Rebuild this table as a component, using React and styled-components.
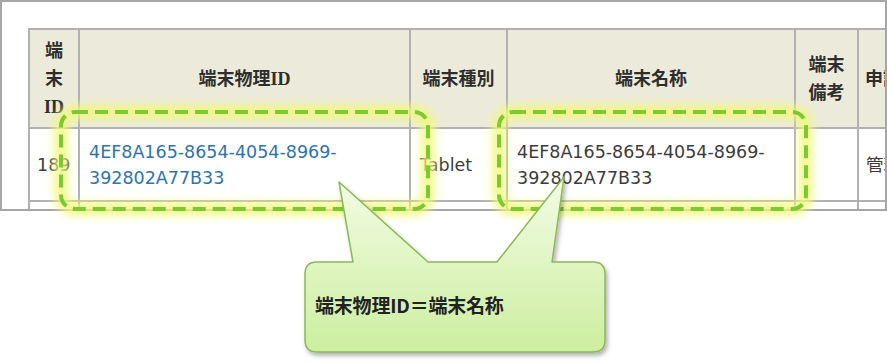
import React from 'react';
import styled, { createGlobalStyle } from 'styled-components';

const GlobalStyle = createGlobalStyle`
  html, body {
    margin: 0;
    padding: 0;
    background: #ffffff;
  }
`;

const columns = [50, 331, 97, 288, 63, 120];

const Stage = styled.div`
  position: relative;
  width: 887px;
  height: 363px;
  overflow: hidden;
  background: #ffffff;
`;

const Frame = styled.div`
  box-sizing: border-box;
  width: 887px;
  height: 211px;
  border: 2px solid #a6a6a6;
  padding: 26px 0 0 26px;
  overflow: hidden;
  background: #ffffff;
`;

const Table = styled.table`
  border-collapse: collapse;
  table-layout: fixed;
  width: ${columns.reduce((a, b) => a + b, 0)}px;
`;

const HeadCell = styled.th`
  height: 97px;
  padding: 0 6px;
  background: #ecebdb;
  border: 2px solid #b1b1b1;
  color: #2e2e2e;
  font-family: "Liberation Serif", "Noto Sans CJK JP", serif;
  font-size: 18px;
  font-weight: bold;
  line-height: 28px;
  text-align: ${(p) => (p.$left ? 'left' : 'center')};
  vertical-align: middle;
  white-space: nowrap;
`;

const Cell = styled.td`
  height: ${(p) => p.$h || 71}px;
  padding: 0 9px 0 ${(p) => p.$pl ?? 9}px;
  border: 2px solid #b1b1b1;
  color: #3c3c3c;
  font-family: "DejaVu Sans", "Noto Sans CJK JP", sans-serif;
  font-size: 17.5px;
  line-height: 26px;
  text-align: left;
  vertical-align: middle;
  overflow: hidden;
`;

const Link = styled.span`
  color: #2f73ac;
`;

const Overlay = styled.svg`
  position: absolute;
  left: 0;
  top: 0;
  width: 887px;
  height: 363px;
  pointer-events: none;
`;

const CalloutText = styled.div`
  position: absolute;
  left: 305px;
  top: 262px;
  width: 300px;
  height: 90px;
  box-sizing: border-box;
  padding: 0 0 6px 10px;
  display: flex;
  align-items: center;
  color: #222222;
  font-family: "Noto Sans CJK JP", sans-serif;
  font-size: 19px;
  font-weight: bold;
  letter-spacing: -0.2px;
`;

const marks = [
  { x: 61, y: 112, w: 367, h: 97 },
  { x: 499, y: 112, w: 307, h: 97 },
];

const calloutPath =
  'M 317 262 L 353 262 L 339 182 L 428 262 L 497 262 L 564 177 L 552 262 L 593 262 ' +
  'Q 605 262 605 274 L 605 340 Q 605 352 593 352 L 317 352 Q 305 352 305 340 ' +
  'L 305 274 Q 305 262 317 262 Z';

export default function App() {
  return (
    <>
      <GlobalStyle />
      <Stage>
        <Frame>
          <Table>
            <colgroup>
              {columns.map((w, i) => (
                <col key={i} style={{ width: w }} />
              ))}
            </colgroup>
            <thead>
              <tr>
                <HeadCell>端<br />末<br />ID</HeadCell>
                <HeadCell>端末物理ID</HeadCell>
                <HeadCell>端末種別</HeadCell>
                <HeadCell>端末名称</HeadCell>
                <HeadCell>端末<br />備考</HeadCell>
                <HeadCell $left>申請者</HeadCell>
              </tr>
            </thead>
            <tbody>
              <tr>
                <Cell $pl={7}>189</Cell>
                <Cell><Link>4EF8A165-8654-4054-8969-392802A77B33</Link></Cell>
                <Cell>Tablet</Cell>
                <Cell>4EF8A165-8654-4054-8969-392802A77B33</Cell>
                <Cell />
                <Cell $pl={7}>管理者</Cell>
              </tr>
              <tr>
                <Cell $h={40} />
                <Cell $h={40} />
                <Cell $h={40} />
                <Cell $h={40} />
                <Cell $h={40} />
                <Cell $h={40} />
              </tr>
            </tbody>
          </Table>
        </Frame>

        <Overlay viewBox="0 0 887 363">
          <defs>
            <filter id="glow" x="-20%" y="-40%" width="140%" height="180%">
              <feGaussianBlur stdDeviation="4.5" />
            </filter>
            <linearGradient id="calloutFill" x1="0" y1="0" x2="0" y2="1">
              <stop offset="0" stopColor="#f2fce4" />
              <stop offset="1" stopColor="#cdeea0" />
            </linearGradient>
            <filter id="shadow" x="-10%" y="-10%" width="120%" height="130%">
              <feDropShadow dx="2" dy="3" stdDeviation="2" floodColor="#000" floodOpacity="0.3" />
            </filter>
          </defs>

          {marks.map((m, i) => (
            <g key={i}>
              <rect
                x={m.x} y={m.y} width={m.w} height={m.h} rx="14"
                fill="none" stroke="#f0f87a" strokeOpacity="0.85" strokeWidth="14"
                filter="url(#glow)"
              />
              <rect
                x={m.x} y={m.y} width={m.w} height={m.h} rx="14"
                fill="none" stroke="#7ec832" strokeWidth="4" strokeDasharray="13 7"
              />
            </g>
          ))}

          <path
            d={calloutPath}
            fill="url(#calloutFill)"
            stroke="#8cb85a"
            strokeWidth="1.5"
            strokeLinejoin="round"
            filter="url(#shadow)"
          />
        </Overlay>

        <CalloutText>端末物理ID＝端末名称</CalloutText>
      </Stage>
    </>
  );
}
